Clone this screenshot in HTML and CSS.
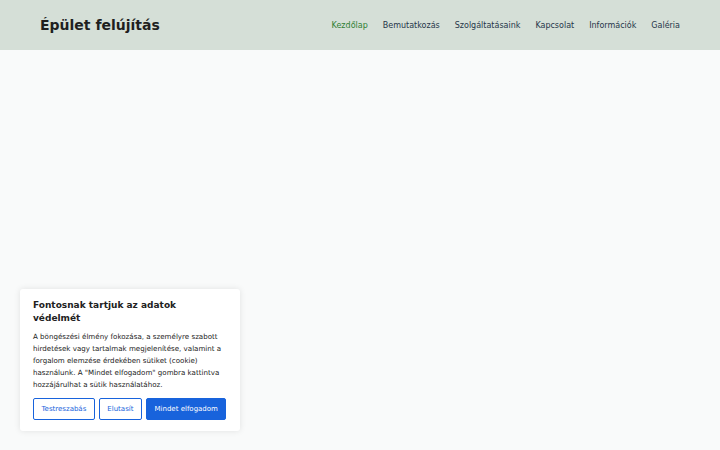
FILE: index.html
```html
<!DOCTYPE html>
<html>
<head>
    <meta charset="utf-8">
    <link rel="stylesheet" href="styles.css">
</head>
<body>
    <div class="header">
        <div class="brand">Épület felújítás</div>
        <nav class="nav">
            <a href="#" class="active">Kezdőlap</a>
            <a href="#">Bemutatkozás</a>
            <a href="#">Szolgáltatásaink</a>
            <a href="#">Kapcsolat</a>
            <a href="#">Információk</a>
            <a href="#">Galéria</a>
        </nav>
    </div>

    <div class="main"></div>

    <div class="cookie-box">
        <h3>Fontosnak tartjuk az adatok védelmét</h3>
        <p>A böngészési élmény fokozása, a személyre szabott hirdetések vagy tartalmak megjelenítése, valamint a forgalom elemzése érdekében sütiket (cookie) használunk. A "Mindet elfogadom" gombra kattintva hozzájárulhat a sütik használatához.</p>
        <div class="cookie-actions">
            <button class="btn btn-outline">Testreszabás</button>
            <button class="btn btn-outline">Elutasít</button>
            <button class="btn btn-primary">Mindet elfogadom</button>
        </div>
    </div>
</body>
</html>
```

FILE: styles.css
```css
* {
    box-sizing: border-box;
    margin: 0;
    padding: 0;
}

body {
    width: 720px;
    height: 450px;
    font-family: "DejaVu Sans", sans-serif;
    background: #f9fafa;
    color: #212121;
    overflow: hidden;
    position: relative;
}

.header {
    height: 50px;
    background: #d5dfd7;
    display: flex;
    align-items: center;
    justify-content: space-between;
    padding: 0 40px;
}

.brand {
    font-size: 14px;
    font-weight: bold;
    color: #1f1f1f;
}

.nav {
    display: flex;
    gap: 15px;
}

.nav a {
    font-size: 8px;
    color: #26364a;
    text-decoration: none;
}

.nav a.active {
    color: #2e8034;
}

.cookie-box {
    position: absolute;
    left: 20px;
    top: 289px;
    width: 220px;
    background: #fff;
    border-radius: 3px;
    box-shadow: 0 0 6px rgba(0, 0, 0, 0.1);
    padding: 10px 15px 11px 13px;
}

.cookie-box h3 {
    font-size: 9px;
    font-weight: bold;
    line-height: 12.5px;
    color: #212121;
    margin-bottom: 7px;
}

.cookie-box p {
    font-size: 7.1px;
    line-height: 11.9px;
    color: #212121;
    margin-bottom: 7px;
}

.cookie-actions {
    display: flex;
    gap: 4px;
}

.btn {
    font-family: "DejaVu Sans", sans-serif;
    font-size: 7px;
    height: 22px;
    padding: 0 7.5px;
    border-radius: 2px;
    white-space: nowrap;
    flex-shrink: 0;
    cursor: pointer;
}

.btn-outline {
    background: #fff;
    border: 1px solid #1863dc;
    color: #1863dc;
}

.btn-primary {
    background: #1863dc;
    border: 1px solid #1863dc;
    color: #fff;
}
```
